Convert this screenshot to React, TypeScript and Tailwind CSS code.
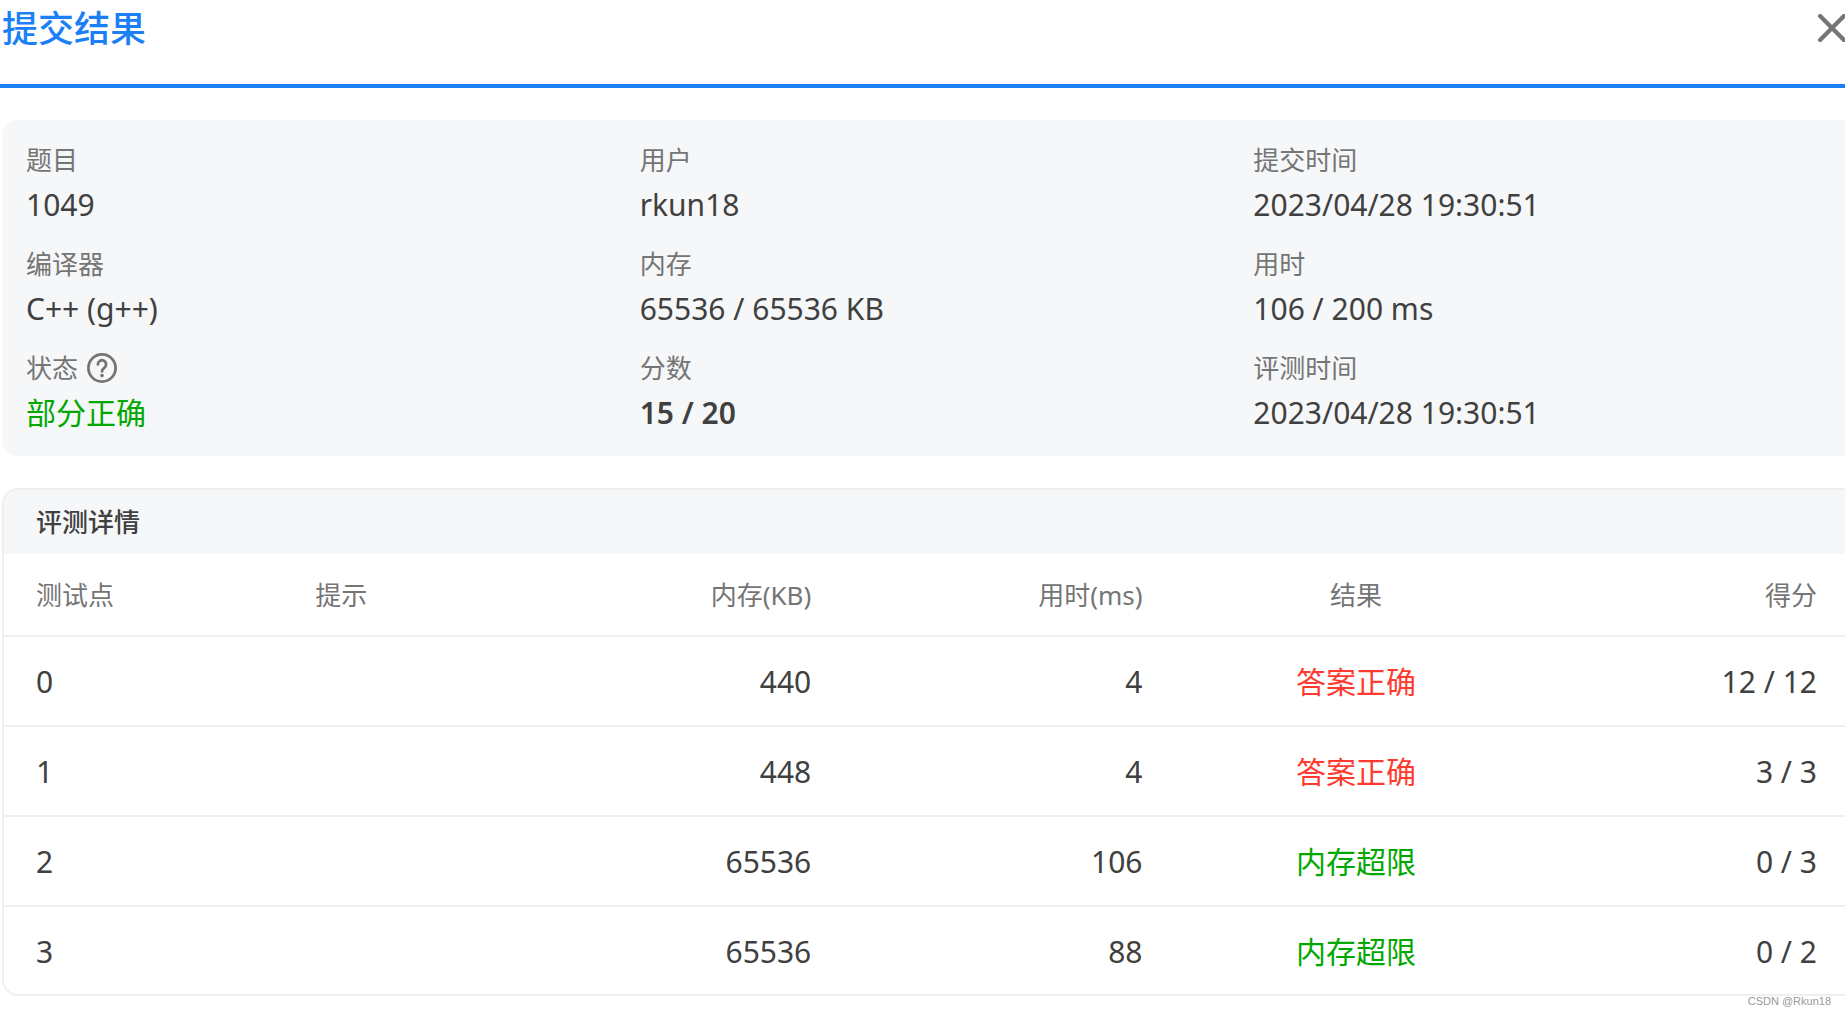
import clsx from "clsx"

const summary = [
  { label: "题目", value: "1049" },
  { label: "用户", value: "rkun18" },
  { label: "提交时间", value: "2023/04/28 19:30:51" },
  { label: "编译器", value: "C++ (g++)" },
  { label: "内存", value: "65536 / 65536 KB" },
  { label: "用时", value: "106 / 200 ms" },
  { label: "状态", value: "部分正确", help: true, className: "text-[#00a800]" },
  { label: "分数", value: "15 / 20", className: "font-semibold" },
  { label: "评测时间", value: "2023/04/28 19:30:51" },
]

const results = [
  { id: 0, memory: 440, time: 4, result: "答案正确", accepted: true, score: "12 / 12" },
  { id: 1, memory: 448, time: 4, result: "答案正确", accepted: true, score: "3 / 3" },
  { id: 2, memory: 65536, time: 106, result: "内存超限", accepted: false, score: "0 / 3" },
  { id: 3, memory: 65536, time: 88, result: "内存超限", accepted: false, score: "0 / 2" },
]

function CloseIcon() {
  return (
    <svg viewBox="0 0 28 28" className="size-7" fill="none" stroke="currentColor" strokeWidth="4.2" strokeLinecap="round">
      <path d="M2.1 2.1 25.9 25.9M25.9 2.1 2.1 25.9" />
    </svg>
  )
}

function HelpIcon() {
  return (
    <svg viewBox="0 0 30 30" className="size-[30px]" fill="none" stroke="currentColor" strokeWidth="2.8" strokeLinecap="round">
      <circle cx="15" cy="15" r="13.6" />
      <path d="M10.9 11.4a4.1 4.1 0 1 1 6.4 3.4c-1.5 1-2.3 1.7-2.3 3.6" />
      <circle cx="15" cy="22.6" r="1.8" fill="currentColor" stroke="none" />
    </svg>
  )
}

function Summary() {
  return (
    <dl className="grid grid-cols-3 gap-x-6 gap-y-[22px] rounded-2xl bg-[#f5f7f9] px-6 pt-6 pb-[22px]">
      {summary.map((item) => (
        <div key={item.label} className="flex flex-col gap-2">
          <dt className="flex h-8 items-center gap-[9px] text-[26px] leading-8 text-[#757575]">
            {item.label}
            {item.help && (
              <button type="button" aria-label="状态说明">
                <HelpIcon />
              </button>
            )}
          </dt>
          <dd className={clsx("text-[30px] leading-[42px]", item.className)}>{item.value}</dd>
        </div>
      ))}
    </dl>
  )
}

function ResultTable() {
  return (
    <section className="overflow-hidden rounded-2xl border-2 border-[#efefef]">
      <h2 className="bg-[#f5f7f9] px-8 py-4 text-[26px] leading-8 font-medium">评测详情</h2>
      <table className="w-full table-fixed">
        <thead>
          <tr className="h-[82px] border-b-2 border-[#efefef] text-[26px] leading-8 text-[#757575] [&>th]:px-8 [&>th]:font-normal [&>th:last-child]:pr-12">
            <th className="w-[15%] text-left">测试点</th>
            <th className="w-[12.2%] text-left">提示</th>
            <th className="w-[17.9%] text-right">内存(KB)</th>
            <th className="w-[17.8%] text-right">用时(ms)</th>
            <th className="w-[19.5%] text-center">结果</th>
            <th className="text-right">得分</th>
          </tr>
        </thead>
        <tbody>
          {results.map((row) => (
            <tr
              key={row.id}
              className="h-[90px] border-b-2 border-[#efefef] text-[30px] leading-10 last:h-[88px] last:border-b-0 [&>td]:px-8 [&>td]:pt-[2px] [&>td:last-child]:pr-12"
            >
              <td>{row.id}</td>
              <td />
              <td className="text-right">{row.memory}</td>
              <td className="text-right">{row.time}</td>
              <td className={clsx("text-center", row.accepted ? "text-[#ff3b2f]" : "text-[#00a800]")}>{row.result}</td>
              <td className="text-right">{row.score}</td>
            </tr>
          ))}
        </tbody>
      </table>
    </section>
  )
}

function App() {
  return (
    <div className="relative min-h-screen overflow-hidden bg-white font-['Noto_Sans','Noto_Sans_CJK_SC',sans-serif] text-[#404040]">
      <header className="-mr-1 flex h-[88px] items-start justify-between border-b-4 border-[#1b80f7] pr-[3px] pl-[2px]">
        <h1 className="pt-[5px] text-4xl leading-12 font-medium text-[#1b80f7]">提交结果</h1>
        <button type="button" aria-label="关闭" className="pt-[14px] text-[#757575]">
          <CloseIcon />
        </button>
      </header>
      {/* the panels run past the right edge */}
      <main className="-mr-[22px] ml-[2px] flex flex-col gap-8 pt-8 pb-4">
        <Summary />
        <ResultTable />
      </main>
      <span className="absolute right-[14px] bottom-[5px] font-['Liberation_Sans',sans-serif] text-[11px] leading-4 text-[#999]">
        CSDN @Rkun18
      </span>
    </div>
  )
}

export default App
